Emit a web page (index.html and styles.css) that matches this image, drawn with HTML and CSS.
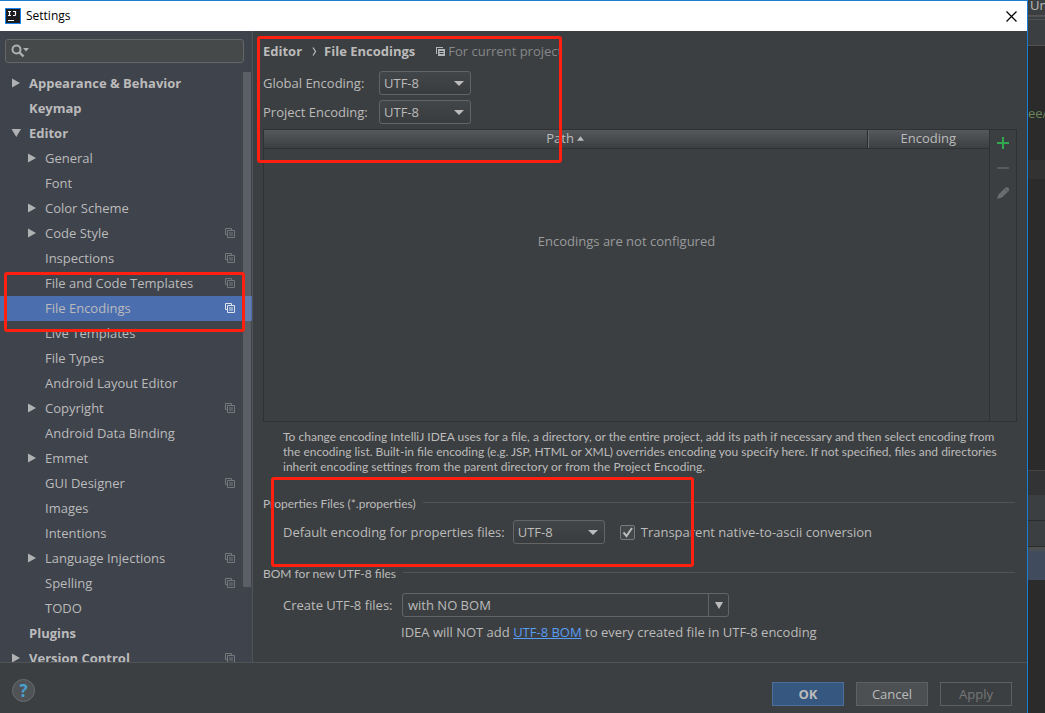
FILE: index.html
```html
<!DOCTYPE html>
<html lang="en">
<head>
<meta charset="utf-8">
<title>Settings</title>
<link rel="stylesheet" href="styles.css">
</head>
<body>
<svg class="defs" aria-hidden="true">
  <symbol id="copy" viewBox="0 0 10 10"><path d="M2 6.500H.5v-6h6V2M2.500 2.500h7v7h-7zM4 5h4M4 7h4" fill="none" stroke="currentColor"/></symbol>
  <symbol id="right" viewBox="0 0 8 10"><path d="M0 .5l8 4.500-8 4.500z" fill="currentColor"/></symbol>
  <symbol id="down" viewBox="0 0 10 8"><path d="M0 0h9.500L4.750 8z" fill="currentColor"/></symbol>
</svg>
<div class="screen">
  <div class="dialog">
    <header class="titlebar">
      <svg class="logo" viewBox="0 0 16 16"><path fill="#1a84ee" d="M0 0h16v16H0z"/><path fill="#1b1b20" d="M1 1h14v14H1z"/><path d="M3 3.500h3M4.500 3.500v4M3 7.500h3M8 3.500h2.500v3.200q0 .8-.8.8H8M3 12.500h6" fill="none" stroke="#fff" stroke-width="1.200"/></svg>
      <h1 class="title">Settings</h1>
      <button class="close" aria-label="Close"><svg viewBox="0 0 11 11"><path d="M.5.500l10 10M10.500.500l-10 10" stroke="#000" stroke-width="1.200"/></svg></button>
    </header>
    <div class="body">
      <aside class="sidebar">
        <div class="search">
          <svg viewBox="0 0 19 14"><circle cx="5.500" cy="5.500" r="4" fill="none" stroke="#afb1b3" stroke-width="2"/><path d="M8.500 8.500l4 4" stroke="#afb1b3" stroke-width="2.400"/><path d="M12 4h6l-3 3.500z" fill="#afb1b3"/></svg>
          <input type="text" aria-label="Search settings">
        </div>
        <div class="treewrap">
          <ul class="tree">
            <li class="row top"><svg class="arrow"><use href="#right"/></svg><span>Appearance &amp; Behavior</span></li>
            <li class="row top"><i class="arrow"></i><span>Keymap</span></li>
            <li class="row top"><svg class="arrow open"><use href="#down"/></svg><span>Editor</span></li>
            <li class="row"><svg class="arrow"><use href="#right"/></svg><span>General</span></li>
            <li class="row"><i class="arrow"></i><span>Font</span></li>
            <li class="row"><svg class="arrow"><use href="#right"/></svg><span>Color Scheme</span></li>
            <li class="row"><svg class="arrow"><use href="#right"/></svg><span>Code Style</span><svg class="copy"><use href="#copy"/></svg></li>
            <li class="row"><i class="arrow"></i><span>Inspections</span><svg class="copy"><use href="#copy"/></svg></li>
            <li class="row"><i class="arrow"></i><span>File and Code Templates</span><svg class="copy"><use href="#copy"/></svg></li>
            <li class="row selected"><i class="arrow"></i><span>File Encodings</span><svg class="copy"><use href="#copy"/></svg></li>
            <li class="row"><i class="arrow"></i><span>Live Templates</span></li>
            <li class="row"><i class="arrow"></i><span>File Types</span></li>
            <li class="row"><i class="arrow"></i><span>Android Layout Editor</span></li>
            <li class="row"><svg class="arrow"><use href="#right"/></svg><span>Copyright</span><svg class="copy"><use href="#copy"/></svg></li>
            <li class="row"><i class="arrow"></i><span>Android Data Binding</span></li>
            <li class="row"><svg class="arrow"><use href="#right"/></svg><span>Emmet</span></li>
            <li class="row"><i class="arrow"></i><span>GUI Designer</span><svg class="copy"><use href="#copy"/></svg></li>
            <li class="row"><i class="arrow"></i><span>Images</span></li>
            <li class="row"><i class="arrow"></i><span>Intentions</span></li>
            <li class="row"><svg class="arrow"><use href="#right"/></svg><span>Language Injections</span><svg class="copy"><use href="#copy"/></svg></li>
            <li class="row"><i class="arrow"></i><span>Spelling</span><svg class="copy"><use href="#copy"/></svg></li>
            <li class="row"><i class="arrow"></i><span>TODO</span></li>
            <li class="row top"><i class="arrow"></i><span>Plugins</span></li>
            <li class="row top"><svg class="arrow"><use href="#right"/></svg><span>Version Control</span><svg class="copy"><use href="#copy"/></svg></li>
          </ul>
          <div class="scrollbar"></div>
        </div>
        <div class="mark mark-tree"></div>
      </aside>
      <main class="main">
        <div class="crumbs">
          <b>Editor</b>
          <svg class="chevron" viewBox="0 0 5 9"><path d="M1 .5l2.500 4L1 8.500" fill="none" stroke="#bbb" stroke-width="1.200"/></svg>
          <b>File Encodings</b>
          <span class="scope"><svg viewBox="0 0 9 9"><path fill="#b4b6b8" d="M0 0h7v1H1v6H0zM2 2h7v7H2z"/><path d="M3.500 4.500h4M3.500 6.500h4" stroke="#3c3f41"/></svg>For current project</span>
        </div>
        <div class="fields">
          <label for="global">Global Encoding:</label>
          <span class="combo"><select id="global"><option>UTF-8</option></select></span>
          <label for="project">Project Encoding:</label>
          <span class="combo"><select id="project"><option>UTF-8</option></select></span>
        </div>
        <div class="panel">
          <table class="grid">
            <thead><tr><th>Path <svg viewBox="0 0 8 5"><path d="M4 0l4 5H0z" fill="#bbb"/></svg></th><th class="enc">Encoding</th></tr></thead>
            <tbody><tr><td colspan="2">Encodings are not configured</td></tr></tbody>
          </table>
          <div class="tools">
            <button aria-label="Add"><svg viewBox="0 0 12 12"><path d="M6 0v12M0 6h12" stroke="#2fa84f" stroke-width="2"/></svg></button>
            <button aria-label="Remove"><svg viewBox="0 0 12 12"><path d="M0 6h12" stroke="#585a5c" stroke-width="2"/></svg></button>
            <button aria-label="Edit"><svg viewBox="0 0 12 12"><path d="M0 12l1.500-4.500L8 1q2-1.500 3.500 0t0 3.200L5 10.500z" fill="#6a6c6e"/><path d="M7.500 1.500l3 3" stroke="#4c4f51"/></svg></button>
          </div>
        </div>
        <p class="help">To change encoding IntelliJ IDEA uses for a file, a directory, or the entire project, add its path if necessary and then select encoding from<br>the encoding list. Built-in file encoding (e.g. JSP, HTML or XML) overrides encoding you specify here. If not specified, files and directories<br>inherit encoding settings from the parent directory or from the Project Encoding.</p>
        <h2 class="section">Properties Files (*.properties)</h2>
        <div class="line props">
          <label for="propenc">Default encoding for properties files:</label>
          <span class="combo"><select id="propenc"><option>UTF-8</option></select></span>
          <label class="check"><span class="box"><input type="checkbox" checked><svg viewBox="0 0 15 15"><path d="M3.500 7.500l3 3.500 5.500-8" fill="none" stroke="#bbb" stroke-width="2"/></svg></span>Transparent native-to-ascii conversion</label>
        </div>
        <h2 class="section">BOM for new UTF-8 files</h2>
        <div class="line bom">
          <label for="bom">Create UTF-8 files:</label>
          <span class="combo wide"><select id="bom"><option>with NO BOM</option></select></span>
        </div>
        <p class="note">IDEA will NOT add <a href="#">UTF-8 BOM</a> to every created file in UTF-8 encoding</p>
        <div class="mark mark-top"></div>
        <div class="mark mark-props"></div>
      </main>
    </div>
    <footer class="footer">
      <button class="helpbtn" aria-label="Help">?</button>
      <button class="btn primary">OK</button>
      <button class="btn">Cancel</button>
      <button class="btn" disabled>Apply</button>
    </footer>
  </div>
  <div class="editor">
    <div class="ed-menu">Un</div>
    <div class="ed-bar"></div>
    <div class="ed-code">ee/</div>
    <div class="ed-caret"></div>
    <div class="ed-blank"></div>
    <div class="ed-tab"></div>
    <div class="ed-tool"></div>
    <div class="ed-tool"></div>
    <div class="ed-sel"></div>
  </div>
</div>
</body>
</html>
```
FILE: styles.css
```css
* { box-sizing: border-box; }
body {
  margin: 0;
  background: #2b2b2b;
  color: #bbb;
  font: 13px/20px "Open Sans", "Noto Sans", sans-serif;
}
button, input, select { font: inherit; color: inherit; margin: 0; }
button { padding: 0; border: 0; background: none; }
svg { display: block; flex: none; }
.defs { position: absolute; width: 0; height: 0; }
.screen { display: flex; height: 100vh; overflow: hidden; }
.dialog {
  flex: 1;
  min-width: 0;
  display: flex;
  flex-direction: column;
  background: #3c3f41;
  border-top: 1px solid #1a7fd4;
  border-right: 1px solid #1a7fd4;
}

.titlebar {
  flex: none;
  height: 30px;
  display: flex;
  align-items: center;
  gap: 5px;
  padding: 0 10px 0 5px;
  background: #fff;
  color: #000;
}
.logo { width: 16px; height: 16px; }
.title { margin: 0; font-size: 12px; font-weight: 400; }
.close { margin-left: auto; }
.close svg { width: 11px; height: 11px; }

.body { flex: 1; min-height: 0; display: flex; }
.sidebar {
  position: relative;
  flex: none;
  width: 253px;
  display: flex;
  flex-direction: column;
  background: #3f434c;
  border-right: 1px solid #515456;
}
.search {
  flex: none;
  display: flex;
  align-items: center;
  height: 24px;
  margin: 8px 8px 8px 5px;
  padding-left: 5px;
  background: #45494a;
  border: 1px solid #646668;
  border-radius: 3px;
}
.search svg { width: 19px; height: 14px; }
.search input { flex: 1; min-width: 0; border: 0; background: none; outline: 0; }
.treewrap { position: relative; flex: 1; min-height: 0; overflow: hidden; }
.tree { list-style: none; margin: 0; padding: 0; }
.row { display: flex; align-items: center; height: 25px; padding: 0 17px 2px 28px; }
.row.top { padding-left: 12px; font-weight: 700; }
.row span { flex: 1; white-space: nowrap; }
.arrow { flex: none; width: 8px; height: 10px; margin-right: 9px; color: #afb1b3; }
.arrow.open { width: 11px; height: 8px; margin-right: 7px; margin-left: -1px; }
.copy { width: 10px; height: 10px; color: #74777b; }
.row.selected { background: #4b6eaf; }
.row.selected .copy { color: #dfe3ea; }
.scrollbar {
  position: absolute;
  top: 1px;
  right: 1px;
  width: 8px;
  height: 515px;
  background: rgba(166, 166, 166, .28);
}

.main { position: relative; flex: 1; min-width: 0; padding: 10px 10px 0; }
.crumbs { display: flex; align-items: center; height: 20px; white-space: nowrap; }
.chevron { width: 5px; height: 9px; margin: 0 7px 0 10px; }
.scope { display: flex; align-items: center; gap: 3px; margin-left: 21px; color: #85888a; }
.scope svg { width: 9px; height: 9px; }
.fields {
  display: grid;
  grid-template-columns: 106px max-content;
  gap: 5px 10px;
  align-items: center;
  margin: 10px 0 5px;
  white-space: nowrap;
}
.combo { position: relative; display: block; width: 92px; height: 24px; }
.combo select {
  appearance: none;
  width: 100%;
  height: 100%;
  padding: 0 4px;
  border: 1px solid #646464;
  border-radius: 3px;
  background: linear-gradient(#434648, #393c3e);
}
.combo::after {
  content: "";
  position: absolute;
  top: 10px;
  right: 7px;
  border: 5px solid transparent;
  border-top-color: #bbb;
  border-bottom: 0;
  pointer-events: none;
}
.panel { display: flex; height: 293px; border: 1px solid #2f3133; }
.grid { flex: 1; border-collapse: collapse; table-layout: fixed; height: 100%; }
.grid th {
  height: 18px;
  padding: 0;
  font-weight: 400;
  line-height: 17px;
  background: linear-gradient(#55595c, #3c3f41);
  border-bottom: 1px solid #2f3133;
}
.grid th svg { display: inline-block; width: 7px; height: 5px; vertical-align: 2px; }
.grid .enc { width: 122px; border-left: 1px solid #2b2b2b; box-shadow: inset 1px 0 #686b6d; }
.grid td { padding: 82px 0 0; text-align: center; vertical-align: top; color: #999b9d; }
.tools {
  flex: none;
  width: 27px;
  display: flex;
  flex-direction: column;
  align-items: center;
  border-left: 1px solid #2f3133;
}
.tools button { height: 25px; }
.tools svg { width: 12px; height: 12px; }
.help, .section { font-family: Lato, "Open Sans", sans-serif; font-size: 12px; }
.help { margin: 7px 0 22px 20px; line-height: 15px; white-space: nowrap; }
.section {
  display: flex;
  align-items: center;
  gap: 7px;
  height: 16px;
  margin: 0 2px 0 0;
  font-weight: 400;
  line-height: 16px;
}
.section::after { content: ""; flex: 1; height: 1px; margin-bottom: 3px; background: #515456; }
.line { display: flex; align-items: center; padding-left: 20px; white-space: nowrap; }
.props { margin: 8px 0 22px; gap: 8px; }
.check { display: flex; align-items: center; gap: 6px; margin-left: 7px; }
.box { position: relative; width: 15px; height: 15px; }
.box input {
  appearance: none;
  display: block;
  width: 15px;
  height: 15px;
  border: 1px solid #787a7c;
  border-radius: 2px;
  background: #43474a;
}
.box svg { position: absolute; inset: 0; pointer-events: none; }
.bom { margin-top: 11px; }
.bom label { width: 119px; }
.combo.wide { width: 327px; }
.combo.wide select {
  padding-left: 5px;
  background: linear-gradient(#646464, #646464) right 19px top 0 / 1px 100% no-repeat;
}
.combo.wide::after { right: 6px; top: 9px; border-width: 7px 4px 0; }
.note { margin: 5px 0 0 138px; }
.note a { color: #589df6; }

.mark { position: absolute; border: 3px solid #ff2010; border-radius: 3px; pointer-events: none; }
.mark-tree { top: 241px; left: 4px; width: 241px; height: 60px; z-index: 1; }
.mark-top { top: 5px; left: 4px; width: 305px; height: 127px; }
.mark-props { top: 446px; left: 18px; width: 423px; height: 90px; }

.footer {
  flex: none;
  height: 51px;
  display: flex;
  align-items: center;
  gap: 12px;
  padding: 12px 15px 0 12px;
  border-top: 1px solid #515456;
}
.helpbtn {
  width: 23px;
  height: 23px;
  margin: 0 auto 8px 0;
  border: 1px solid #6a6d6f;
  border-radius: 50%;
  background: #4f5355;
  color: #4aa0d0;
  font-size: 17px;
  font-weight: 700;
  line-height: 21px;
}
.btn { width: 72px; height: 24px; border: 1px solid #5e6163; background: #4c5052; }
.btn.primary { background: #365880; border-color: #4a6f9c; font-weight: 700; }
.btn:disabled { background: none; color: #777; }

.editor { flex: none; width: 17px; overflow: hidden; display: flex; flex-direction: column; }
.ed-menu { height: 16px; line-height: 10px; padding-left: 2px; background: #3c3f41; border-bottom: 1px solid #555; }
.ed-bar { height: 30px; background: #3c3f41; border-top: 4px double #515151; border-bottom: 1px solid #515151; }
.ed-code { height: 114px; padding-top: 57px; color: #6a8759; }
.ed-caret { height: 19px; background: #323232; }
.ed-blank { height: 291px; }
.ed-tab { height: 25px; background: #313335; border-top: 1px solid #444; }
.ed-tool { height: 26px; background: #3c3f41; border-bottom: 1px solid #2b2b2b; }
.ed-sel { height: 33px; background: #414b5e; border-top: 4px solid #4c4f51; }
```
